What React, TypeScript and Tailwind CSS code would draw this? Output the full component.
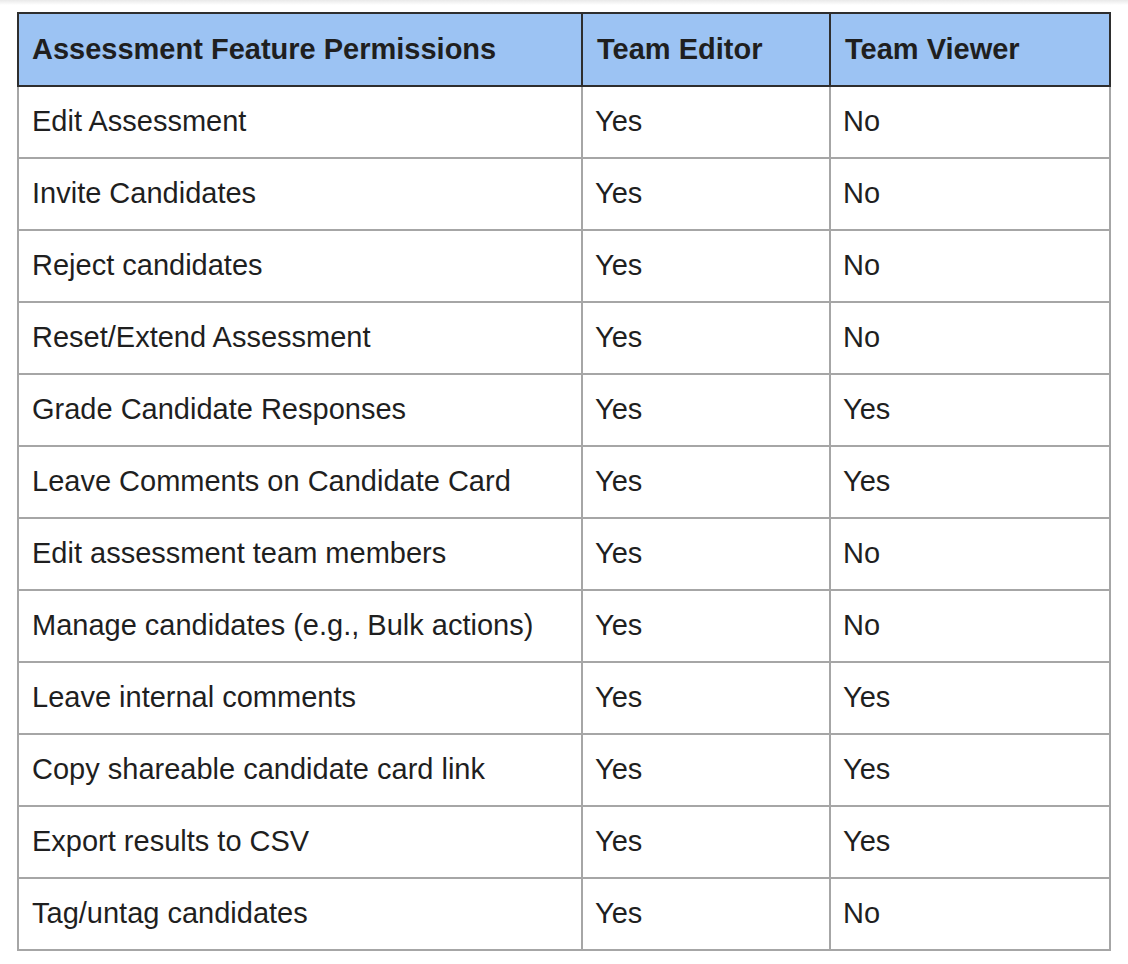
const rows: [string, string, string][] = [
  ['Edit Assessment', 'Yes', 'No'],
  ['Invite Candidates', 'Yes', 'No'],
  ['Reject candidates', 'Yes', 'No'],
  ['Reset/Extend Assessment', 'Yes', 'No'],
  ['Grade Candidate Responses', 'Yes', 'Yes'],
  ['Leave Comments on Candidate Card', 'Yes', 'Yes'],
  ['Edit assessment team members', 'Yes', 'No'],
  ['Manage candidates (e.g., Bulk actions)', 'Yes', 'No'],
  ['Leave internal comments', 'Yes', 'Yes'],
  ['Copy shareable candidate card link', 'Yes', 'Yes'],
  ['Export results to CSV', 'Yes', 'Yes'],
  ['Tag/untag candidates', 'Yes', 'No'],
]

export default function App() {
  return (
    <div className="w-[1128px] h-[964px] bg-white font-['Liberation_Sans',Arial,sans-serif] text-[#1f1f1f]">
      <div className="h-[5px] bg-gradient-to-b from-[#e9e9e9] to-white" />
      <div className="pt-[7px] pl-[17px]">
        <table className="table-fixed border-collapse w-[1092px]">
          <colgroup>
            <col className="w-[564px]" />
            <col className="w-[248px]" />
            <col className="w-[280px]" />
          </colgroup>
          <thead>
            <tr className="h-[73px] bg-[#9cc3f3]">
              <th className="border-2 border-[#2e2e2e] pl-[13px] text-left text-[29px] font-bold">
                Assessment Feature Permissions
              </th>
              <th className="border-2 border-[#2e2e2e] pl-[14px] text-left text-[29px] font-bold">
                Team Editor
              </th>
              <th className="border-2 border-[#2e2e2e] pl-[14px] text-left text-[29px] font-bold">
                Team Viewer
              </th>
            </tr>
          </thead>
          <tbody>
            {rows.map(([feature, editor, viewer]) => (
              <tr key={feature} className="h-[72px]">
                <td className="border-2 border-t-0 border-[#a6a6a6] pl-[13px] text-[29px]">{feature}</td>
                <td className="border-2 border-t-0 border-[#a6a6a6] pl-[12px] text-[29px]">{editor}</td>
                <td className="border-2 border-t-0 border-[#a6a6a6] pl-[12px] text-[29px]">{viewer}</td>
              </tr>
            ))}
          </tbody>
        </table>
      </div>
    </div>
  )
}
